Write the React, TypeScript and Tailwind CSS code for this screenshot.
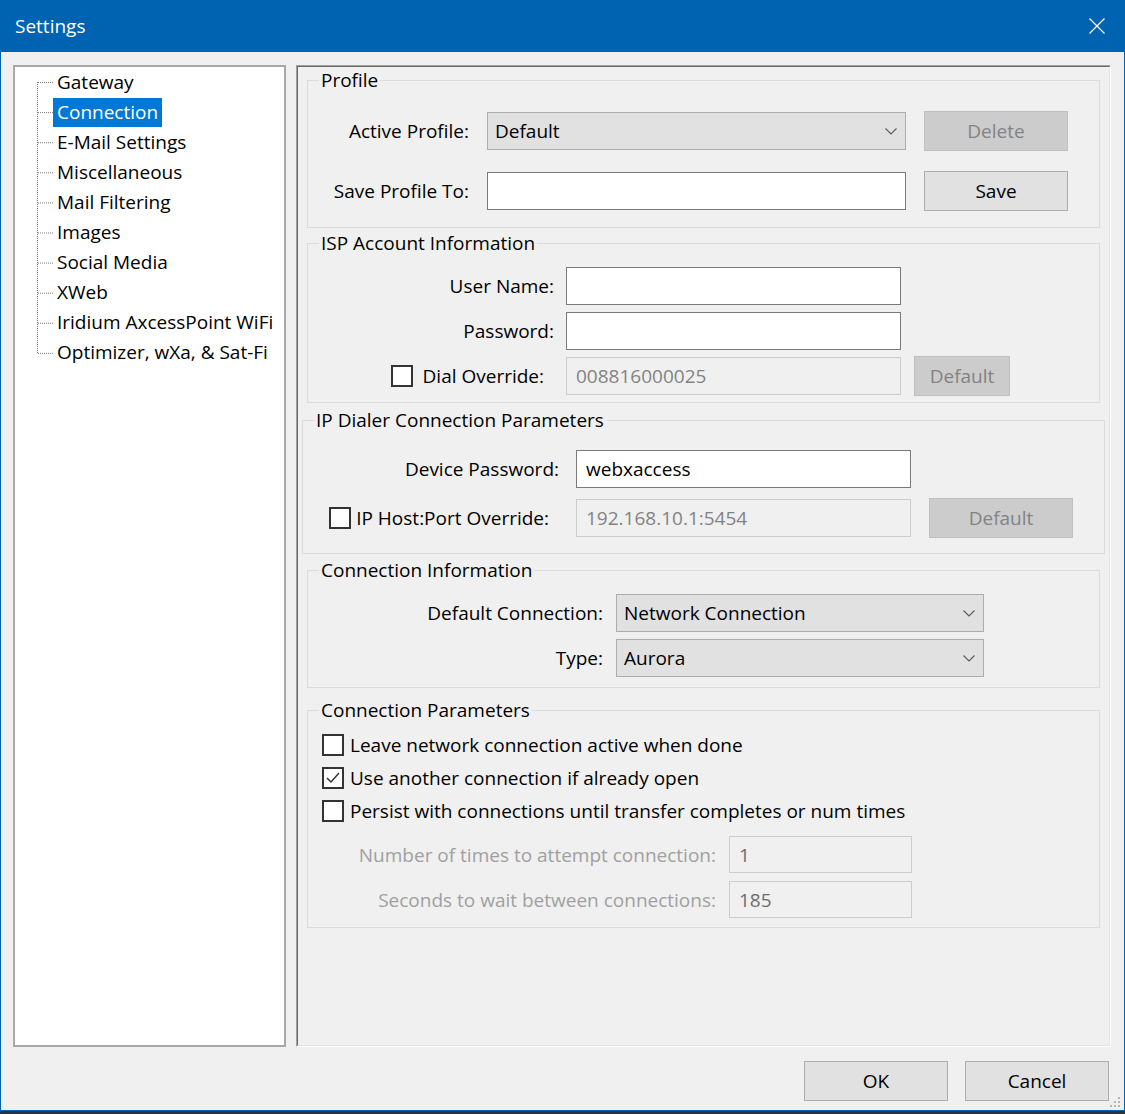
import React from 'react';

const treeItems = [
  'Gateway',
  'Connection',
  'E-Mail Settings',
  'Miscellaneous',
  'Mail Filtering',
  'Images',
  'Social Media',
  'XWeb',
  'Iridium AxcessPoint WiFi',
  'Optimizer, wXa, & Sat-Fi',
];

const Chevron = () => (
  <svg width="12" height="7" viewBox="0 0 12 7" className="shrink-0">
    <polyline points="0.5,0.5 6,6 11.5,0.5" fill="none" stroke="#5a5a5a" strokeWidth="1.1" />
  </svg>
);

const Checkbox = ({ checked }: { checked?: boolean }) => (
  <span className="w-[22px] h-[22px] border-2 border-[#333333] bg-white flex items-center justify-center shrink-0">
    {checked && (
      <svg width="18" height="18" viewBox="0 0 18 18">
        <polyline points="3,9 7,13 15,4" fill="none" stroke="#333333" strokeWidth="1.5" />
      </svg>
    )}
  </span>
);

const Combo = ({ value, width }: { value: string; width: string }) => (
  <div className={`${width} h-[38px] bg-[#e1e1e1] border border-[#adadad] flex items-center justify-between pl-[7px] pr-[8px]`}>
    <span>{value}</span>
    <Chevron />
  </div>
);

const TextBox = ({ value, width, disabled, dim }: { value?: string; width: string; disabled?: boolean; dim?: string }) => (
  <div
    className={`${width} h-[38px] border flex items-center pl-[9px] ${
      disabled ? 'bg-[#f0f0f0] border-[#cccccc]' : 'bg-white border-[#7a7a7a]'
    } ${dim ?? ''}`}
  >
    {value}
  </div>
);

const Btn = ({ label, width, disabled }: { label: string; width: string; disabled?: boolean }) => (
  <div
    className={`${width} h-[40px] border flex items-center justify-center shrink-0 ${
      disabled ? 'bg-[#cccccc] border-[#bfbfbf] text-[#838383]' : 'bg-[#e1e1e1] border-[#adadad]'
    }`}
  >
    {label}
  </div>
);

const GroupBox = ({ title, className, children }: { title: string; className: string; children: React.ReactNode }) => (
  <fieldset className={`border border-[#dcdcdc] ${className}`}>
    <legend className="ml-[11px] px-[2px] leading-[26px]">{title}</legend>
    {children}
  </fieldset>
);

export default function App() {
  return (
    <div className="w-[1125px] h-[1114px] bg-[#2b3340] text-black text-[19px] leading-[26px] font-['Open_Sans','Noto_Sans',sans-serif]">
      <div className="relative w-[1125px] h-[1111px] border-x border-b border-[#0063b1] bg-[#f0f0f0] flex flex-col">
        {/* title bar */}
        <div className="h-[52px] bg-[#0063b1] flex items-center justify-between pl-[14px] pr-[19px] text-white text-[19px] shrink-0">
          <span>Settings</span>
          <svg width="16" height="16" viewBox="0 0 16 16">
            <path d="M0.5 0.5 L15.5 15.5 M15.5 0.5 L0.5 15.5" stroke="#ffffff" strokeWidth="1.2" />
          </svg>
        </div>

        <div className="flex flex-col px-[12px] pt-[13px]">
          <div className="flex gap-[10px] h-[982px]">
            {/* tree */}
            <div className="w-[273px] h-full bg-white border-2 border-[#a9a9a9] flex pl-[20px]">
              <svg width="18" height="300" className="shrink-0">
                <line x1="2.5" y1="15" x2="2.5" y2="286" stroke="#7c7c7c" strokeDasharray="1 1" />
                {treeItems.map((_, i) => (
                  <line key={i} x1="3" y1={15.5 + i * 30.1} x2="18" y2={15.5 + i * 30.1} stroke="#7c7c7c" strokeDasharray="1 1" />
                ))}
              </svg>
              <div className="flex flex-col">
                {treeItems.map((t) => (
                  <div key={t} className="h-[30.1px] flex items-center">
                    <span className={`px-[4px] leading-[29px] whitespace-nowrap ${t === 'Connection' ? 'bg-[#0078d7] text-white' : ''}`}>{t}</span>
                  </div>
                ))}
              </div>
            </div>

            {/* settings panel */}
            <div className="w-[815px] h-full border border-t-[#a0a0a0] border-l-[#a0a0a0] border-r-white border-b-white">
              <div className="h-full border border-t-[#696969] border-l-[#696969] border-r-[#e3e3e3] border-b-[#e3e3e3] flex flex-col">
                <GroupBox title="Profile" className="mx-[9px]">
                  <div className="pt-[18px] pb-[16px] flex flex-col gap-[20px]">
                    <div className="h-[40px] flex items-center">
                      <div className="w-[161px] text-right">Active Profile:</div>
                      <div className="ml-[18px]"><Combo value="Default" width="w-[419px]" /></div>
                      <div className="ml-[18px]"><Btn label="Delete" width="w-[144px]" disabled /></div>
                    </div>
                    <div className="h-[40px] flex items-center">
                      <div className="w-[161px] text-right">Save Profile To:</div>
                      <div className="ml-[18px]"><TextBox width="w-[419px]" /></div>
                      <div className="ml-[18px]"><Btn label="Save" width="w-[144px]" /></div>
                    </div>
                  </div>
                </GroupBox>

                <GroupBox title="ISP Account Information" className="mx-[9px] mt-[2px]">
                  <div className="pt-[10px] pb-[6px] flex flex-col gap-[5px]">
                    <div className="h-[40px] flex items-center">
                      <div className="w-[246px] text-right">User Name:</div>
                      <div className="ml-[12px]"><TextBox width="w-[335px]" /></div>
                    </div>
                    <div className="h-[40px] flex items-center">
                      <div className="w-[246px] text-right">Password:</div>
                      <div className="ml-[12px]"><TextBox width="w-[335px]" /></div>
                    </div>
                    <div className="h-[40px] flex items-center">
                      <div className="w-[246px] pr-[10px] flex items-center justify-end gap-[10px]">
                        <Checkbox />
                        <span>Dial Override:</span>
                      </div>
                      <div className="ml-[12px]"><TextBox width="w-[335px]" value="008816000025" disabled dim="text-[#838383]" /></div>
                      <div className="ml-[13px]"><Btn label="Default" width="w-[96px]" disabled /></div>
                    </div>
                  </div>
                </GroupBox>

                <GroupBox title="IP Dialer Connection Parameters" className="mx-[4px] mt-[4px]">
                  <div className="pt-[16px] pb-[15px] flex flex-col gap-[9px]">
                    <div className="h-[40px] flex items-center">
                      <div className="w-[256px] text-right">Device Password:</div>
                      <div className="ml-[17px]"><TextBox width="w-[335px]" value="webxaccess" /></div>
                    </div>
                    <div className="h-[40px] flex items-center">
                      <div className="w-[256px] pr-[10px] flex items-center justify-end gap-[5px]">
                        <Checkbox />
                        <span>IP Host:Port Override:</span>
                      </div>
                      <div className="ml-[17px]"><TextBox width="w-[335px]" value="192.168.10.1:5454" disabled dim="text-[#838383]" /></div>
                      <div className="ml-[18px]"><Btn label="Default" width="w-[144px]" disabled /></div>
                    </div>
                  </div>
                </GroupBox>

                <GroupBox title="Connection Information" className="mx-[9px] mt-[3px]">
                  <div className="pt-[10px] pb-[9px] flex flex-col gap-[5px]">
                    <div className="h-[40px] flex items-center">
                      <div className="w-[295px] text-right">Default Connection:</div>
                      <div className="ml-[13px]"><Combo value="Network Connection" width="w-[368px]" /></div>
                    </div>
                    <div className="h-[40px] flex items-center">
                      <div className="w-[295px] text-right">Type:</div>
                      <div className="ml-[13px]"><Combo value="Aurora" width="w-[368px]" /></div>
                    </div>
                  </div>
                </GroupBox>

                <GroupBox title="Connection Parameters" className="mx-[9px] mt-[9px]">
                  <div className="pt-[5px] pb-[8px] flex flex-col">
                    {[
                      ['Leave network connection active when done', false],
                      ['Use another connection if already open', true],
                      ['Persist with connections until transfer completes or num times', false],
                    ].map(([label, checked]) => (
                      <div key={label as string} className="h-[33px] pl-[14px] flex items-center gap-[6px]">
                        <Checkbox checked={checked as boolean} />
                        <span>{label as string}</span>
                      </div>
                    ))}
                    <div className="mt-[8px] flex flex-col gap-[6px]">
                      <div className="h-[39px] flex items-center">
                        <div className="w-[408px] text-right text-[#a0a0a0]">Number of times to attempt connection:</div>
                        <div className="ml-[13px]"><TextBox width="w-[183px] !h-[37px]" value="1" disabled dim="text-[#6d6d6d]" /></div>
                      </div>
                      <div className="h-[39px] flex items-center">
                        <div className="w-[408px] text-right text-[#a0a0a0]">Seconds to wait between connections:</div>
                        <div className="ml-[13px]"><TextBox width="w-[183px] !h-[37px]" value="185" disabled dim="text-[#6d6d6d]" /></div>
                      </div>
                    </div>
                  </div>
                </GroupBox>
              </div>
            </div>
          </div>

          <div className="mt-[14px] flex justify-end gap-[17px] pr-[3px]">
            <Btn label="OK" width="w-[144px]" />
            <Btn label="Cancel" width="w-[144px]" />
          </div>
        </div>

        {/* size grip */}
        <svg width="14" height="14" viewBox="0 0 14 14" className="absolute right-[3px] bottom-[1px]">
          {[
            [11, 2],
            [7, 6],
            [11, 6],
            [3, 10],
            [7, 10],
            [11, 10],
          ].map(([x, y], i) => (
            <rect key={i} x={x} y={y} width="2" height="2" fill="#b5b5b5" />
          ))}
        </svg>
      </div>
    </div>
  );
}
